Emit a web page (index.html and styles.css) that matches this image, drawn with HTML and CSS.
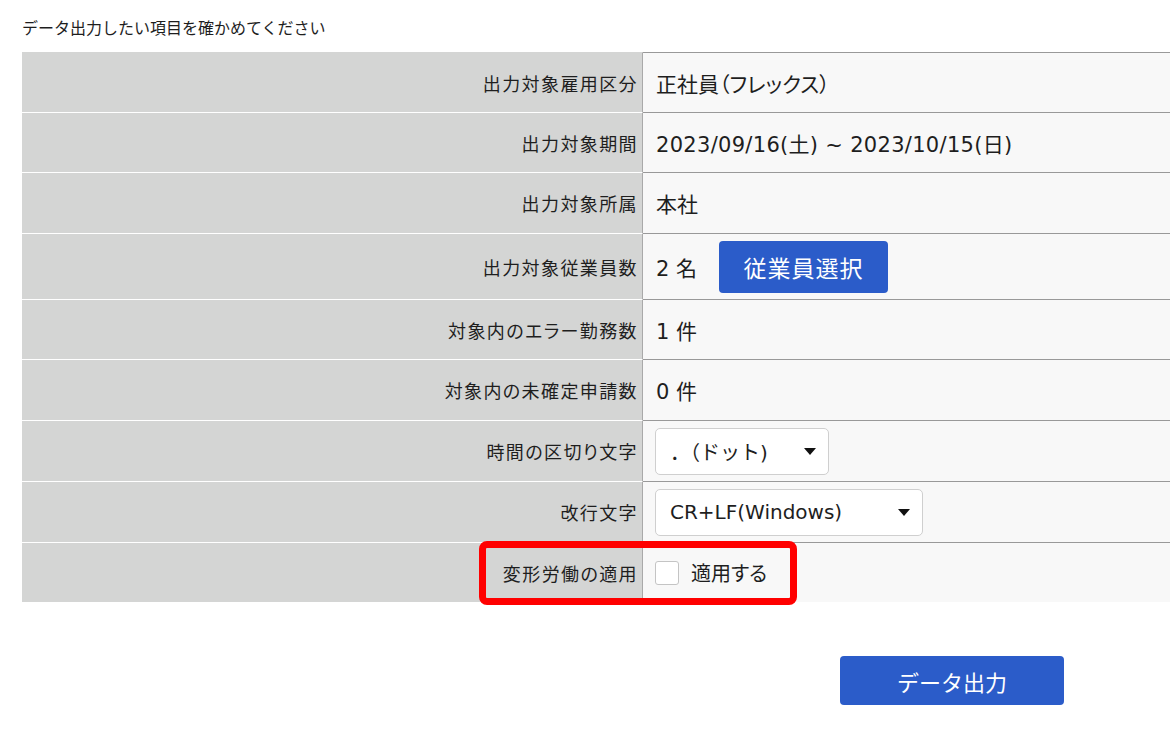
FILE: index.html
```html
<!DOCTYPE html>
<html lang="ja">
<head>
<meta charset="utf-8">
<title>データ出力</title>
<link rel="stylesheet" href="styles.css">
</head>
<body>
<div class="page">
  <p class="title">データ出力したい項目を確かめてください</p>
  <div class="table">
    <div class="row">
      <div class="label">出力対象雇用区分</div>
      <div class="value">正社員（フレックス）</div>
    </div>
    <div class="row">
      <div class="label">出力対象期間</div>
      <div class="value date">2023/09/16(土) ~ 2023/10/15(日)</div>
    </div>
    <div class="row row-61">
      <div class="label">出力対象所属</div>
      <div class="value">本社</div>
    </div>
    <div class="row row-66">
      <div class="label">出力対象従業員数</div>
      <div class="value"><span>2 名</span><button class="btn btn-select">従業員選択</button></div>
    </div>
    <div class="row">
      <div class="label">対象内のエラー勤務数</div>
      <div class="value">1 件</div>
    </div>
    <div class="row row-61">
      <div class="label">対象内の未確定申請数</div>
      <div class="value">0 件</div>
    </div>
    <div class="row row-61">
      <div class="label">時間の区切り文字</div>
      <div class="value">
        <div class="select select-dot"><span class="select-text fullwidth">．（ドット)</span><svg class="arrow" width="12" height="7" viewBox="0 0 12 7"><path d="M0 0H12L6 7Z" fill="#111"/></svg></div>
      </div>
    </div>
    <div class="row row-61">
      <div class="label">改行文字</div>
      <div class="value">
        <div class="select select-crlf"><span class="select-text latin">CR+LF(Windows)</span><svg class="arrow" width="12" height="7" viewBox="0 0 12 7"><path d="M0 0H12L6 7Z" fill="#111"/></svg></div>
      </div>
    </div>
    <div class="row row-last">
      <div class="label">変形労働の適用</div>
      <div class="value"><span class="checkbox"></span><span class="check-label">適用する</span></div>
      <div class="highlight"></div>
    </div>
  </div>
  <div class="actions">
    <button class="btn btn-output">データ出力</button>
  </div>
</div>
</body>
</html>
```

FILE: styles.css
```css
* { box-sizing: border-box; }
html, body { margin: 0; padding: 0; background: #fff; overflow: hidden; }
body {
  font-family: "Noto Sans CJK JP", sans-serif;
  color: #1e1e1e;
  font-feature-settings: "palt";
}
.page { width: 1170px; padding-left: 22px; }
.title {
  margin: 0;
  padding-top: 15px;
  height: 52px;
  font-size: 16px;
  line-height: 24px;
  font-feature-settings: normal;
}
.table { width: 1148px; }
.row {
  position: relative;
  display: grid;
  grid-template-columns: 621px 1fr;
  min-height: 60px;
}
.row-61 { min-height: 61px; }
.row-66 { min-height: 66px; }
.label {
  background: #d4d5d4;
  border-top: 1px solid #fff;
  border-right: 1px solid #a9a9a9;
  display: flex;
  align-items: center;
  justify-content: flex-end;
  padding-right: 4px;
  font-size: 18px;
  letter-spacing: 1.4px;
}
.row:first-child .label { border-top-color: #d4d5d4; }
.value {
  background: #f8f8f8;
  border-top: 1px solid #999;
  display: flex;
  align-items: center;
  padding-left: 13px;
  font-family: "DejaVu Sans", "Noto Sans CJK JP", sans-serif;
  font-size: 21px;
}
.value.date { letter-spacing: 0.3px; }
.btn {
  border: none;
  background: #2b5cc9;
  color: #fff;
  border-radius: 4px;
  font-family: "Noto Sans CJK JP", sans-serif;
  cursor: pointer;
}
.btn-select {
  margin-left: 22px;
  width: 169px;
  height: 52px;
  font-size: 23px;
  letter-spacing: 1px;
  padding: 0;
}
.select {
  display: flex;
  align-items: center;
  justify-content: space-between;
  height: 47px;
  background: #fff;
  border: 1px solid #cfcfcf;
  border-radius: 5px;
  margin-left: -1px;
  padding: 0 12px 0 14px;
}
.select-dot { width: 174px; }
.select-crlf { width: 268px; }
.select-text { font-size: 20px; }
.select-text.fullwidth { font-feature-settings: normal; }
.select-text.latin { font-family: "DejaVu Sans", sans-serif; }
.arrow { flex: none; }
.checkbox {
  width: 24px;
  height: 24px;
  background: #fff;
  border: 1px solid #c4c4c4;
  border-radius: 3px;
  margin-left: -1px;
}
.check-label {
  margin-left: 12px;
  font-size: 20px;
}
.highlight {
  position: absolute;
  left: 457px;
  top: -1px;
  width: 318px;
  height: 64px;
  border: 7px solid #ff0000;
  border-radius: 8px;
  pointer-events: none;
}
.actions {
  display: flex;
  margin-top: 54px;
  padding-left: 818px;
}
.btn-output {
  width: 224px;
  height: 49px;
  font-size: 22px;
  padding: 0;
  font-feature-settings: normal;
}
```
